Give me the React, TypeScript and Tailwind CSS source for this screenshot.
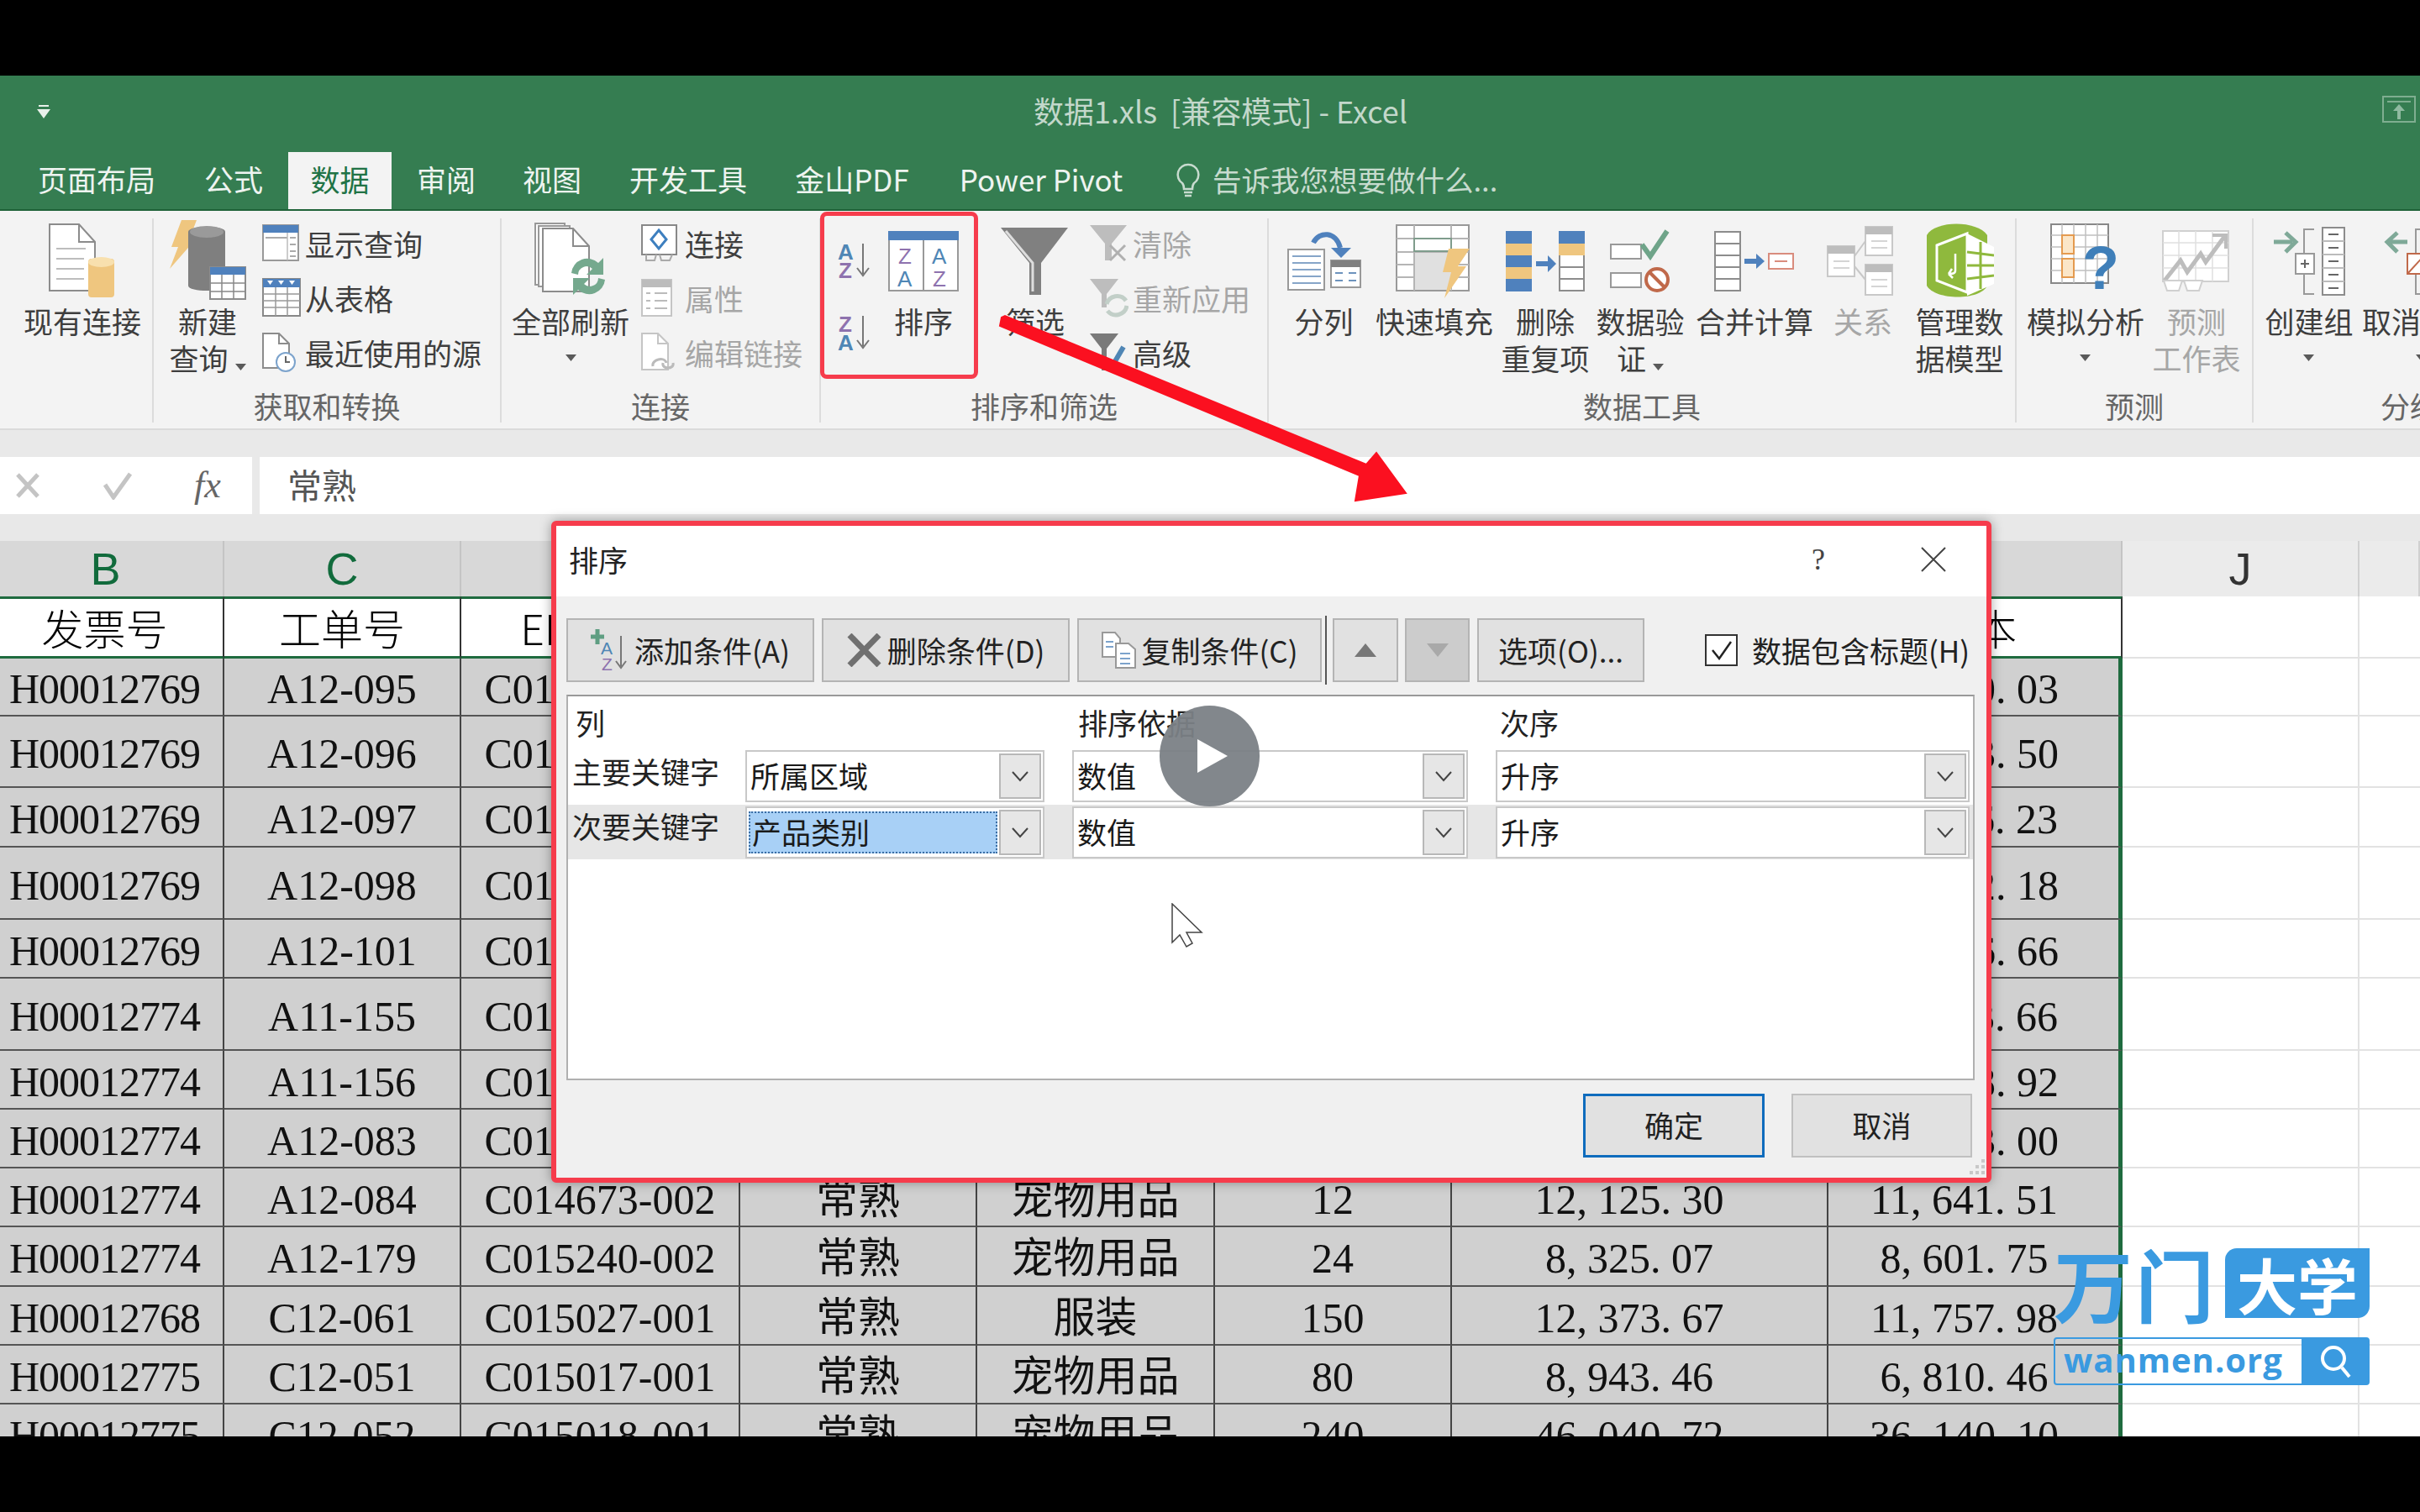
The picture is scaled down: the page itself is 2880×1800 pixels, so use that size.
import React from "react";

const Caret = ({ c = "#5a5a5a" }: { c?: string }) => (
  <svg width="13" height="8" viewBox="0 0 13 8" className="inline-block"><path d="M0 0H13L6.5 8Z" fill={c} /></svg>
);

const G = "#8c8c8c";
const BL = "#4f81bd";
const OR = "#efc67f";
const PU = "#8e72ae";

const AzText = ({ x, y, s, c }: { x: number; y: number; s: string; c: string }) => (
  <text x={x} y={y} fontFamily="Liberation Sans" fontSize="26" fontWeight="700" fill={c}>{s}</text>
);

const IExisting = () => (
  <svg width="80" height="90" viewBox="0 0 80 90">
    <path d="M1 1H36L55 22V80H1Z" fill="#fff" stroke={G} strokeWidth="2" />
    <path d="M36 1V22H55" fill="none" stroke={G} strokeWidth="2" />
    <path d="M9 30H44M9 42H42M9 54H42M9 66H42" stroke="#bdbdbd" strokeWidth="2" />
    <rect x="47" y="42" width="31" height="46" rx="4" fill={OR} />
    <ellipse cx="62.5" cy="46" rx="15.5" ry="6" fill="#f8e0ae" />
  </svg>
);
const INewQuery = () => (
  <svg width="94" height="98" viewBox="0 0 94 98">
    <path d="M16 0H34L24 26H30L2 58L12 32H4Z" fill={OR} />
    <path d="M24 14C24 6 68 6 68 14V78C68 86 24 86 24 78Z" fill="#7f7f7f" />
    <ellipse cx="46" cy="14" rx="20" ry="7" fill="#9a9a9a" />
    <rect x="50" y="56" width="42" height="38" fill="#fff" stroke={G} strokeWidth="2" />
    <rect x="50" y="56" width="42" height="9" fill={BL} />
    <path d="M50 75H92M50 85H92M64 65V94M78 65V94" stroke="#888" strokeWidth="1.5" />
  </svg>
);
const IShowQuery = () => (
  <svg width="44" height="46" viewBox="0 0 44 46">
    <rect x="1" y="1" width="42" height="42" fill="#fff" stroke="#999" strokeWidth="2" />
    <rect x="1" y="1" width="42" height="9" fill={BL} />
    <path d="M4 16H30M33 16H40M33 24H40M33 32H40M33 38H40" stroke="#aaa" strokeWidth="2" />
    <path d="M30 10V43" stroke="#bbb" strokeWidth="1.5" />
  </svg>
);
const IFromTable = () => (
  <svg width="46" height="48" viewBox="0 0 46 48">
    <rect x="1" y="1" width="44" height="44" fill="#fff" stroke="#888" strokeWidth="2" />
    <rect x="1" y="1" width="44" height="10" fill={BL} />
    <path d="M6 3H13L9.5 8ZM19 3H26L22.500 8ZM32 3H39L35.500 8Z" fill="#fff" />
    <path d="M1 19H45M1 27H45M1 35H45M16 11V45M30 11V45" stroke="#999" strokeWidth="1.5" />
  </svg>
);
const IRecent = () => (
  <svg width="40" height="48" viewBox="0 0 40 48">
    <path d="M1 1H20L32 13V42H1Z" fill="#fff" stroke={G} strokeWidth="2" />
    <path d="M20 1V13H32" fill="none" stroke={G} strokeWidth="2" />
    <circle cx="28" cy="35" r="11" fill="#fff" stroke="#7ca3cc" strokeWidth="2" />
    <path d="M28 28V35H33" fill="none" stroke="#666" strokeWidth="2" />
  </svg>
);
const IRefreshAll = () => (
  <svg width="86" height="92" viewBox="0 0 86 92">
    <path d="M1 1H36V74H1Z" fill="#fff" stroke="#999" strokeWidth="2" />
    <path d="M5 4H42V76H5Z" fill="#fff" stroke="#999" strokeWidth="2" />
    <path d="M10 7H46L65 28V82H10Z" fill="#fff" stroke={G} strokeWidth="2" />
    <path d="M46 7V28H65" fill="none" stroke={G} strokeWidth="2" />
    <path d="M44 60A19 19 0 0 1 76 48L82 42V62H62L69 55A10 10 0 0 0 52 62Z" fill="#75a98e" />
    <path d="M84 68A19 19 0 0 1 52 80L46 86V66H66L59 73A10 10 0 0 0 76 66Z" fill="#75a98e" />
  </svg>
);
const IConn = () => (
  <svg width="44" height="46" viewBox="0 0 44 46">
    <rect x="1" y="1" width="41" height="35" fill="#fff" stroke="#888" strokeWidth="2" />
    <path d="M21 7L30 18L21 29L12 18Z" fill="none" stroke="#3d7fbf" strokeWidth="3" />
    <path d="M6 36V43H16L18 36M22 36L24 43H34L37 36" fill="none" stroke="#aaa" strokeWidth="2" />
  </svg>
);
const IProps = () => (
  <svg width="38" height="46" viewBox="0 0 38 46">
    <rect x="1" y="1" width="35" height="43" fill="#fff" stroke="#c5c5c5" strokeWidth="2" />
    <rect x="1" y="1" width="35" height="9" fill="#bcbcbc" />
    <path d="M6 17H11M16 17H31M6 26H11M16 26H31M6 35H11M16 35H31" stroke="#bbb" strokeWidth="2" />
  </svg>
);
const IEditLink = () => (
  <svg width="42" height="48" viewBox="0 0 42 48">
    <path d="M1 1H20L32 13V44H1Z" fill="#fff" stroke="#c5c5c5" strokeWidth="2" />
    <path d="M20 1V13H32" fill="none" stroke="#c5c5c5" strokeWidth="2" />
    <path d="M14 40C12 32 28 28 30 36M26 36C24 44 40 44 38 36" fill="none" stroke="#bbb" strokeWidth="3" />
  </svg>
);
const ISortAZ = () => (
  <svg width="40" height="46" viewBox="0 0 40 46">
    <AzText x={0} y={21} s="A" c="#4f86b5" />
    <AzText x={1} y={43} s="Z" c={PU} />
    <path d="M30 2V38M23 31L30 40L37 31" fill="none" stroke="#777" strokeWidth="2" />
  </svg>
);
const ISortZA = () => (
  <svg width="40" height="46" viewBox="0 0 40 46">
    <AzText x={1} y={21} s="Z" c={PU} />
    <AzText x={0} y={43} s="A" c="#4f86b5" />
    <path d="M30 2V38M23 31L30 40L37 31" fill="none" stroke="#777" strokeWidth="2" />
  </svg>
);
const ISort = () => (
  <svg width="84" height="72" viewBox="0 0 84 72">
    <rect x="1" y="1" width="82" height="70" fill="#fff" stroke="#999" strokeWidth="2" />
    <rect x="0" y="0" width="84" height="11" fill={BL} />
    <path d="M42 11V71" stroke="#999" strokeWidth="2" />
    <text x="12" y="39" fontFamily="Liberation Sans" fontSize="26" fill={PU}>Z</text>
    <text x="11" y="66" fontFamily="Liberation Sans" fontSize="26" fill="#4f86b5">A</text>
    <text x="52" y="39" fontFamily="Liberation Sans" fontSize="26" fill="#4f86b5">A</text>
    <text x="53" y="66" fontFamily="Liberation Sans" fontSize="26" fill={PU}>Z</text>
  </svg>
);
const IFilter = () => (
  <svg width="82" height="80" viewBox="0 0 82 80">
    <path d="M0 0H80L48 42V80H34V42Z" fill="#808080" />
    <path d="M6 4L38 42V76" fill="none" stroke="#ddd" strokeWidth="3" />
  </svg>
);
const IFClear = () => (
  <svg width="46" height="44" viewBox="0 0 46 44">
    <path d="M0 0H44L26 22V42H18V22Z" fill="#bdbdbd" />
    <path d="M24 24L42 42M42 24L24 42" stroke="#b0b0b0" strokeWidth="3" />
  </svg>
);
const IFReapply = () => (
  <svg width="46" height="46" viewBox="0 0 46 46">
    <path d="M0 0H34L20 18V34H14V18Z" fill="#bdbdbd" />
    <path d="M20 30A13 13 0 0 1 43 26M44 32A13 13 0 0 1 21 38" fill="none" stroke="#c2cfc8" strokeWidth="5" />
  </svg>
);
const IFAdv = () => (
  <svg width="46" height="46" viewBox="0 0 46 46">
    <path d="M0 0H34L20 18V44H14V18Z" fill="#7a7a7a" />
    <path d="M26 40L40 16" stroke="#4f86b5" strokeWidth="6" />
  </svg>
);
const ISplit = () => (
  <svg width="88" height="76" viewBox="0 0 88 76">
    <rect x="1" y="24" width="43" height="48" fill="#fff" stroke="#999" strokeWidth="2" />
    <path d="M6 32H40M6 40H40M6 48H40M6 56H40M6 64H40" stroke="#86a5c8" strokeWidth="2" />
    <rect x="52" y="37" width="35" height="32" fill="#fff" stroke="#999" strokeWidth="2" />
    <rect x="52" y="37" width="35" height="8" fill="#808080" />
    <path d="M57 52H66M73 52H82M57 61H66M73 61H82" stroke="#6d93bd" strokeWidth="2" />
    <path d="M31 16C38 2 58 2 63 22" fill="none" stroke={BL} strokeWidth="6" />
    <path d="M52 22H76L64 34Z" fill={BL} />
  </svg>
);
const IFlash = () => (
  <svg width="92" height="88" viewBox="0 0 92 88">
    <rect x="1" y="1" width="86" height="78" fill="#fff" stroke="#999" strokeWidth="2" />
    <path d="M1 17H87M1 33H87M1 48H87M1 63H87M22 1V79M66 1V79" stroke="#b5b5b5" strokeWidth="2" />
    <rect x="22" y="17" width="44" height="15" fill="#fff" stroke="#7f9c8c" strokeWidth="2" />
    <rect x="23" y="34" width="43" height="44" fill="#e0e0e0" />
    <path d="M63 29H88L74 50H84L58 88L66 57H56Z" fill={OR} />
  </svg>
);
const IDup = () => (
  <svg width="94" height="72" viewBox="0 0 94 72">
    <rect x="0" y="0" width="31" height="72" fill={BL} />
    <rect x="0" y="15" width="31" height="14" fill={OR} />
    <rect x="0" y="43" width="31" height="14" fill={OR} />
    <path d="M36 39H54" stroke={BL} strokeWidth="6" />
    <path d="M50 29L60 39L50 49Z" fill={BL} />
    <rect x="64" y="1" width="29" height="70" fill="#fff" stroke={G} strokeWidth="2" />
    <rect x="63" y="0" width="31" height="15" fill={BL} />
    <rect x="63" y="15" width="31" height="14" fill={OR} />
    <path d="M64 43H93M64 57H93" stroke={G} strokeWidth="2" />
  </svg>
);
const IValidate = () => (
  <svg width="72" height="76" viewBox="0 0 72 76">
    <rect x="1" y="18" width="36" height="17" fill="#fff" stroke="#999" strokeWidth="2" />
    <rect x="1" y="52" width="36" height="17" fill="#fff" stroke="#999" strokeWidth="2" />
    <path d="M38 18L48 32L68 2" fill="none" stroke="#6fa489" strokeWidth="6" />
    <circle cx="56" cy="60" r="13" fill="#fff" stroke="#c0694a" strokeWidth="4" />
    <path d="M47 51L65 69" stroke="#c0694a" strokeWidth="4" />
  </svg>
);
const IConsolidate = () => (
  <svg width="96" height="72" viewBox="0 0 96 72">
    <rect x="1" y="1" width="30" height="70" fill="#fff" stroke={G} strokeWidth="2" />
    <path d="M1 15H31M1 29H31M1 43H31M1 57H31" stroke={G} strokeWidth="2" />
    <path d="M36 36H54" stroke={BL} strokeWidth="6" />
    <path d="M50 27L60 36L50 45Z" fill={BL} />
    <rect x="65" y="27" width="29" height="18" fill="#fff" stroke="#d98c7d" strokeWidth="2" />
    <path d="M72 36H87" stroke="#d98c7d" strokeWidth="2" />
  </svg>
);
const IRelate = () => (
  <svg width="86" height="84" viewBox="0 0 86 84">
    <rect x="46" y="1" width="32" height="34" fill="#fff" stroke="#c8c8c8" strokeWidth="2" />
    <rect x="46" y="1" width="32" height="9" fill="#bdbdbd" />
    <rect x="1" y="24" width="32" height="36" fill="#fff" stroke="#c8c8c8" strokeWidth="2" />
    <rect x="1" y="24" width="32" height="9" fill="#bdbdbd" />
    <rect x="46" y="46" width="32" height="36" fill="#fff" stroke="#c8c8c8" strokeWidth="2" />
    <rect x="46" y="46" width="32" height="9" fill="#bdbdbd" />
    <path d="M33 36L46 18M33 48L46 64" stroke="#c8c8c8" strokeWidth="2" />
    <path d="M53 18H72M53 26H72M53 64H72M53 72H72M8 42H27M8 50H27" stroke="#d5d5d5" strokeWidth="2" />
  </svg>
);
const IModel = () => (
  <svg width="82" height="90" viewBox="0 0 82 90">
    <path d="M2 14C12 -4 62 -4 74 14V74C66 92 12 92 2 74Z" fill="#8fb93d" />
    <path d="M14 26L50 12V82L14 68Z" fill="none" stroke="#fff" strokeWidth="3" />
    <path d="M50 12L82 28V72L50 86Z" fill="#fff" />
    <path d="M50 34L82 38M50 50L82 50M50 66L82 62M66 22V78" stroke="#8fb93d" strokeWidth="3" />
    <path d="M36 36V56C36 60 32 60 28 60M28 60L32 54M28 60L33 65" fill="none" stroke="#fff" strokeWidth="2.500" />
  </svg>
);
const IWhatIf = () => (
  <svg width="84" height="90" viewBox="0 0 84 90">
    <rect x="1" y="1" width="68" height="70" fill="#fff" stroke="#888" strokeWidth="2" />
    <path d="M1 14H69M1 28H69M1 42H69M1 56H69M14 1V71M28 1V71M42 1V71M56 1V71" stroke="#c0c0c0" strokeWidth="1.500" />
    <rect x="14" y="14" width="14" height="22" fill="#fbe6c8" stroke="#e49a4f" strokeWidth="2" />
    <rect x="14" y="42" width="14" height="22" fill="#fbe6c8" stroke="#e49a4f" strokeWidth="2" />
    <text x="38" y="78" fontFamily="Liberation Sans" fontSize="72" fontWeight="700" fill="#3f7fb9">?</text>
  </svg>
);
const IForecast = () => (
  <svg width="82" height="74" viewBox="0 0 82 74">
    <rect x="1" y="1" width="78" height="60" fill="#fff" stroke="#d0d0d0" strokeWidth="2" />
    <path d="M1 15H79M1 30H79M1 45H79M20 1V61M40 1V61M60 1V61" stroke="#e0e0e0" strokeWidth="1.500" />
    <path d="M3 60L22 36L30 50L46 28L52 38L74 8" fill="none" stroke="#bdbdbd" strokeWidth="5" />
    <path d="M60 6H76V22" fill="none" stroke="#bdbdbd" strokeWidth="4" />
    <path d="M2 60H24L20 72H6ZM26 60H48L44 72H30Z" fill="#fff" stroke="#d0d0d0" strokeWidth="2" />
  </svg>
);
const IGroup = () => (
  <svg width="88" height="82" viewBox="0 0 88 82">
    <path d="M2 18H24M16 7L28 18L16 30" fill="none" stroke="#7fa998" strokeWidth="5" />
    <path d="M50 3H38V80H50" fill="none" stroke="#999" strokeWidth="2" />
    <rect x="28" y="32" width="22" height="24" fill="#fff" stroke="#999" strokeWidth="2" />
    <path d="M34 44H44M39 39V49" stroke="#666" strokeWidth="2" />
    <rect x="60" y="1" width="26" height="80" fill="#fff" stroke={G} strokeWidth="2" />
    <path d="M60 17H86M60 33H86M60 49H86M60 65H86" stroke="#bbb" strokeWidth="2" />
    <path d="M67 9H79M67 25H79M67 41H79M67 57H79M67 73H79" stroke="#666" strokeWidth="2" />
  </svg>
);
const IUngroup = () => (
  <svg width="88" height="82" viewBox="0 0 88 82">
    <path d="M28 18H6M16 7L4 18L16 30" fill="none" stroke="#7fa998" strokeWidth="5" />
    <path d="M50 3H38V80H50" fill="none" stroke="#999" strokeWidth="2" />
    <rect x="28" y="32" width="22" height="24" fill="#fff" stroke="#c0694a" strokeWidth="2" />
    <path d="M28 56L50 32" stroke="#c0694a" strokeWidth="2" />
  </svg>
);

const Big = ({ cls, icon, lines, caret, dim }: { cls: string; icon: React.ReactNode; lines: string[]; caret?: "inline" | "below"; dim?: boolean }) => (
  <div className={"flex flex-col items-center shrink-0 " + cls}>
    <div className="h-[98px] flex items-center justify-center">{icon}</div>
    <div className={"text-[35px] leading-[44px] whitespace-nowrap text-center " + (dim ? "text-[#a6a6a6]" : "text-[#3e3e3e]")}>
      {lines.map((l, i) => (
        <div key={i}>
          {l}
          {caret === "inline" && i === lines.length - 1 ? <span className="ml-[8px] align-middle"><Caret /></span> : null}
        </div>
      ))}
      {caret === "below" ? <div className="h-[44px] flex items-center justify-center"><Caret /></div> : null}
    </div>
  </div>
);

const Small = ({ icon, label, dim, w }: { icon: React.ReactNode; label: string; dim?: boolean; w?: string }) => (
  <div className="flex items-center h-[65px]">
    <div className={"shrink-0 flex items-center " + (w ?? "w-[51px]")}>{icon}</div>
    <span className={"text-[35px] leading-[44px] whitespace-nowrap " + (dim ? "text-[#a6a6a6]" : "text-[#3e3e3e]")}>{label}</span>
  </div>
);

const Group = ({ cls, label, children }: { cls: string; label: string; children: React.ReactNode }) => (
  <div className={"shrink-0 flex flex-col h-[243px] border-r-[2px] border-r-[#dcdcdc] " + cls}>
    <div className="h-[204px] pt-[2px] flex items-start">{children}</div>
    <div className="h-[39px] flex items-center justify-center text-[35px] text-[#666666] whitespace-nowrap">{label}</div>
  </div>
);

const tabs: [string, string][] = [
  ["页面布局", "w-[196px]"],
  ["公式", "w-[130px]"],
  ["数据", "w-[123px]"],
  ["审阅", "w-[130px]"],
  ["视图", "w-[122px]"],
  ["开发工具", "w-[202px]"],
  ["金山PDF", "w-[188px]"],
  ["Power Pivot", "w-[262px]"],
];

const Ribbon = () => (
  <div className="h-[261px] bg-[#f3f3f3] flex pt-[9px] border-b-[2px] border-b-[#dadada] overflow-hidden">
    <Group cls="w-[183px]" label="">
      <Big cls="w-[140px] ml-[28px]" icon={<IExisting />} lines={["现有连接"]} />
    </Group>
    <Group cls="w-[414px]" label="获取和转换">
      <Big cls="w-[120px] ml-[4px]" icon={<INewQuery />} lines={["新建", "查询"]} caret="inline" />
      <div className="ml-[5px] -mt-[5px]">
        <Small icon={<IShowQuery />} label="显示查询" />
        <Small icon={<IFromTable />} label="从表格" />
        <Small icon={<IRecent />} label="最近使用的源" />
      </div>
    </Group>
    <Group cls="w-[380px]" label="连接">
      <Big cls="w-[140px] ml-[12px]" icon={<IRefreshAll />} lines={["全部刷新"]} caret="below" />
      <div className="ml-[14px] -mt-[5px]">
        <Small w="w-[52px]" icon={<IConn />} label="连接" />
        <Small w="w-[52px]" icon={<IProps />} label="属性" dim />
        <Small w="w-[52px]" icon={<IEditLink />} label="编辑链接" dim />
      </div>
    </Group>
    <Group cls="w-[533px]" label="排序和筛选">
      <div className="w-[59px] ml-[20px] mr-[-7px] flex flex-col gap-[40px] pt-[26px] shrink-0">
        <ISortAZ />
        <ISortZA />
      </div>
      <Big cls="w-[100px]" icon={<ISort />} lines={["排序"]} />
      <Big cls="w-[110px] ml-[28px]" icon={<IFilter />} lines={["筛选"]} />
      <div className="ml-[10px] -mt-[5px]">
        <Small icon={<IFClear />} label="清除" dim />
        <Small icon={<IFReapply />} label="重新应用" dim />
        <Small icon={<IFAdv />} label="高级" />
      </div>
    </Group>
    <Group cls="w-[890px]" label="数据工具">
      <Big cls="w-[131px]" icon={<ISplit />} lines={["分列"]} />
      <Big cls="w-[132px]" icon={<IFlash />} lines={["快速填充"]} />
      <Big cls="w-[132px]" icon={<IDup />} lines={["删除", "重复项"]} />
      <Big cls="w-[94px]" icon={<IValidate />} lines={["数据验", "证"]} caret="inline" />
      <Big cls="w-[178px]" icon={<IConsolidate />} lines={["合并计算"]} />
      <Big cls="w-[80px]" icon={<IRelate />} lines={["关系"]} dim />
      <Big cls="w-[150px]" icon={<IModel />} lines={["管理数", "据模型"]} />
    </Group>
    <Group cls="w-[282px]" label="预测">
      <Big cls="w-[164px]" icon={<IWhatIf />} lines={["模拟分析"]} caret="below" />
      <Big cls="w-[100px]" icon={<IForecast />} lines={["预测", "工作表"]} dim />
    </Group>
    <Group cls="w-[444px] border-r-0" label="分级显示">
      <Big cls="w-[132px]" icon={<IGroup />} lines={["创建组"]} caret="below" />
      <Big cls="w-[134px]" icon={<IUngroup />} lines={["取消组合"]} caret="below" />
    </Group>
  </div>
);

const COLS = "grid grid-cols-[267px_282px_332px_282px_283px_282px_448px_350px_282px_1fr]";

const letters = ["B", "C", "D", "E", "F", "G", "H", "I", "J", ""];
const heads = ["发票号", "工单号", "ERP单号", "所属区域", "产品类别", "数量", "金额", "成本", "", ""];

const rows: { h: number; c: string[] }[] = [
  { h: 69, c: ["H00012769", "A12-095", "C014650-001", "", "", "", "", "10, 830. 03"] },
  { h: 85, c: ["H00012769", "A12-096", "C014651-001", "", "", "", "", "18, 653. 50"] },
  { h: 71, c: ["H00012769", "A12-097", "C014652-001", "", "", "", "", "11, 216. 23"] },
  { h: 86, c: ["H00012769", "A12-098", "C014653-001", "", "", "", "", "17, 402. 18"] },
  { h: 70, c: ["H00012769", "A12-101", "C014654-001", "", "", "", "", "19, 326. 66"] },
  { h: 86, c: ["H00012774", "A11-155", "C014670-001", "", "", "", "", "10, 113. 66"] },
  { h: 70, c: ["H00012774", "A11-156", "C014671-001", "", "", "", "", "18, 058. 92"] },
  { h: 70, c: ["H00012774", "A12-083", "C014672-001", "", "", "", "", "12, 003. 00"] },
  { h: 70, c: ["H00012774", "A12-084", "C014673-002", "常熟", "宠物用品", "12", "12, 125. 30", "11, 641. 51"] },
  { h: 71, c: ["H00012774", "A12-179", "C015240-002", "常熟", "宠物用品", "24", "8, 325. 07", "8, 601. 75"] },
  { h: 70, c: ["H00012768", "C12-061", "C015027-001", "常熟", "服装", "150", "12, 373. 67", "11, 757. 98"] },
  { h: 70, c: ["H00012775", "C12-051", "C015017-001", "常熟", "宠物用品", "80", "8, 943. 46", "6, 810. 46"] },
  { h: 70, c: ["H00012775", "C12-052", "C015018-001", "常熟", "宠物用品", "240", "46, 040. 72", "36, 140. 10"] },
];

const padFor = (i: number) => (i === 0 ? "pr-[16px] tracking-[-1px]" : i === 6 ? "pr-[24px]" : i === 7 ? "pr-[22px]" : "");

const Sheet = () => (
  <div className="flex-1 bg-white overflow-hidden">
    <div className="h-[32px] bg-[#e8e8e8]" />
    <div className={COLS + " h-[66px]"}>
      {letters.map((l, i) => (
        <div key={i} className={"flex items-center justify-center border-r-[2px] text-[54px] leading-[60px] font-['Liberation_Sans',sans-serif] " + (i < 8 ? "bg-[#d8d8d8] border-r-[#c4c4c4] text-[#116b3c]" : "bg-[#ebebeb] border-r-[#d0d0d0] text-[#333333]") + (i === 0 ? " pr-[14px]" : "")}>
          {l}
        </div>
      ))}
    </div>
    <div className={COLS + " h-[74px]"}>
      {heads.map((l, i) =>
        i < 8 ? (
          <div key={i} className={"flex items-center justify-center bg-white border-y-[3px] border-y-[#1f6b3f] border-r-[2px] border-r-[#333333] pb-[2px] text-[50px] leading-[60px] font-light text-black whitespace-nowrap " + (i === 0 ? "pr-[16px]" : "")}>
            {l}
          </div>
        ) : (
          <div key={i} className={"bg-white border-b-[2px] border-b-[#e2e2e2] " + (i === 8 ? "border-r-[2px] border-r-[#e2e2e2]" : "")} />
        )
      )}
    </div>
    {rows.map((r, ri) => (
      <div key={ri} className={COLS} style={{ height: r.h }}>
        {r.c.map((t, i) => (
          <div key={i} className={"flex items-center justify-center min-h-0 pt-[5px] bg-[#d0d0d0] border-b-[2px] border-b-[#555555] whitespace-nowrap text-[50px] leading-[50px] text-[#111111] font-['Liberation_Serif','Noto_Sans_CJK_SC',serif] " + padFor(i) + (i === 7 ? " border-r-[5px] border-r-[#1f6b3f]" : " border-r-[2px] border-r-[#444444]")}>
            {t}
          </div>
        ))}
        <div className="bg-white border-b-[2px] border-b-[#e2e2e2] border-r-[2px] border-r-[#e2e2e2]" />
        <div className="bg-white border-b-[2px] border-b-[#e2e2e2]" />
      </div>
    ))}
  </div>
);

const Chevron = () => (
  <svg width="22" height="14" viewBox="0 0 22 14"><path d="M2 2L11 12L20 2" fill="none" stroke="#444" strokeWidth="2" /></svg>
);

const Select = ({ cls, text, hl }: { cls: string; text: string; hl?: boolean }) => (
  <div className={"shrink-0 flex items-stretch bg-white border-[2px] border-[#c8c8c8] p-[2px] h-[62px] " + cls}>
    <div className="flex-1 flex items-center pr-[2px]">
      <span className={"flex-1 h-[50px] flex items-center pl-[2px] pb-[2px] text-[35px] text-[#1a1a1a] " + (hl ? "bg-[#a8d0f6] border-[2px] border-dotted border-[#3a6ea5]" : "")}>{text}</span>
    </div>
    <div className="w-[50px] bg-[#e6e6e6] border-[2px] border-[#b8b8b8] flex items-center justify-center"><Chevron /></div>
  </div>
);

const ToolBtn = ({ cls, children, bg }: { cls: string; children: React.ReactNode; bg?: string }) => (
  <div className={"shrink-0 h-[76px] flex items-center justify-center gap-[6px] border-[2px] border-[#b4b4b4] text-[35px] text-[#222222] whitespace-nowrap " + (bg ?? "bg-[#e1e1e1]") + " " + cls}>
    {children}
  </div>
);

const Dialog = () => (
  <div className="absolute left-[656px] top-[620px] w-[1714px] h-[788px] border-[6px] border-[#f63c4c] rounded-[6px] bg-[#f0f0f0] flex flex-col shadow-[0_0_14px_rgba(0,0,0,0.35)]">
    <div className="h-[84px] bg-white flex items-center pl-[15px] pb-[4px] text-[35px] text-[#222222]">
      <span className="flex-1">排序</span>
      <span className="w-[130px] text-[36px] text-[#444444] font-['Liberation_Serif',serif]">?</span>
      <svg width="30" height="30" viewBox="0 0 30 30" className="mr-[48px]"><path d="M1 1L29 29M29 1L1 29" stroke="#444" strokeWidth="2" /></svg>
    </div>
    <div className="flex-1 pl-[12px] pr-[14px] pt-[26px] flex flex-col">
      <div className="flex items-center h-[76px]">
        <ToolBtn cls="w-[295px]">
          <svg width="46" height="50" viewBox="0 0 46 50">
            <path d="M8 0V18M0 9H16" stroke="#5f9e82" strokeWidth="5" />
            <text x="12" y="30" fontFamily="Liberation Sans" fontSize="21" fill="#4f86b5">A</text>
            <text x="13" y="49" fontFamily="Liberation Sans" fontSize="21" fill={PU}>Z</text>
            <path d="M36 8V44M30 38L36 46L42 38" fill="none" stroke="#777" strokeWidth="2" />
          </svg>
          添加条件(A)
        </ToolBtn>
        <ToolBtn cls="w-[295px] ml-[9px]">
          <svg width="42" height="40" viewBox="0 0 42 40"><path d="M3 2L38 38M38 2L3 38" stroke="#707070" strokeWidth="7" /></svg>
          删除条件(D)
        </ToolBtn>
        <ToolBtn cls="w-[291px] ml-[9px]">
          <svg width="42" height="44" viewBox="0 0 42 44">
            <path d="M1 1H16L22 8V30H1Z" fill="#fff" stroke="#999" strokeWidth="2" />
            <path d="M17 14H32L40 21V43H17Z" fill="#fff" stroke="#999" strokeWidth="2" />
            <path d="M5 12H14M5 18H14M22 26H34M22 32H34M22 38H34" stroke="#7ca3cc" strokeWidth="2" />
          </svg>
          复制条件(C)
        </ToolBtn>
        <div className="w-[2px] h-[82px] -my-[3px] bg-[#555555] ml-[4px] shrink-0" />
        <ToolBtn cls="w-[78px] ml-[7px]">
          <svg width="26" height="16" viewBox="0 0 26 16"><path d="M13 0L26 16H0Z" fill="#777" /></svg>
        </ToolBtn>
        <ToolBtn cls="w-[77px] ml-[8px]" bg="bg-[#cccccc]">
          <svg width="26" height="16" viewBox="0 0 26 16"><path d="M0 0H26L13 16Z" fill="#a9a9a9" /></svg>
        </ToolBtn>
        <ToolBtn cls="w-[199px] ml-[9px]">选项(O)...</ToolBtn>
        <div className="ml-[72px] w-[39px] h-[38px] bg-white border-[2px] border-[#333333] flex items-center justify-center shrink-0">
          <svg width="26" height="24" viewBox="0 0 26 24"><path d="M2 12L10 22L24 2" fill="none" stroke="#222" strokeWidth="2.500" /></svg>
        </div>
        <span className="ml-[17px] text-[35px] text-[#222222] whitespace-nowrap">数据包含标题(H)</span>
      </div>
      <div className="mt-[15px] h-[459px] w-[1676px] bg-white border-[2px] border-[#b0b0b0] border-t-[#999999] text-[35px] text-[#222222]">
        <div className="h-[64px] flex items-center pb-[2px]">
          <span className="w-[607px] pl-[9px]">列</span>
          <span className="w-[502px]">排序依据</span>
          <span>次序</span>
        </div>
        <div className="h-[65px] flex">
          <span className="w-[211px] pl-[5px] shrink-0 leading-[50px]">主要关键字</span>
          <Select cls="w-[356px]" text="所属区域" />
          <Select cls="w-[471px] ml-[33px]" text="数值" />
          <Select cls="w-[564px] ml-[33px]" text="升序" />
        </div>
        <div className="h-[65px] flex bg-[#e6e6e6] pt-[2px]">
          <span className="w-[211px] pl-[5px] shrink-0 leading-[46px]">次要关键字</span>
          <Select cls="w-[356px]" text="产品类别" hl />
          <Select cls="w-[471px] ml-[33px]" text="数值" />
          <Select cls="w-[564px] ml-[33px]" text="升序" />
        </div>
      </div>
      <div className="mt-[16px] flex justify-end gap-[32px] pr-[3px]">
        <div className="w-[216px] h-[76px] bg-[#e1e1e1] border-[3px] border-[#0f6cbd] flex items-center justify-center pb-[2px] text-[35px] text-[#222222]">确定</div>
        <div className="w-[215px] h-[76px] bg-[#e1e1e1] border-[2px] border-[#c0c0c0] flex items-center justify-center pb-[2px] text-[35px] text-[#222222]">取消</div>
      </div>
    </div>
    <svg width="24" height="24" viewBox="0 0 24 24" className="absolute right-0 bottom-0">
      <path d="M18 2h4v4h-4zM18 9h4v4h-4zM11 9h4v4h-4zM18 16h4v4h-4zM11 16h4v4h-4zM4 16h4v4H4z" fill="#c8c8c8" />
    </svg>
  </div>
);

export default function App() {
  return (
    <div className="relative w-[2880px] h-[1800px] bg-black overflow-hidden flex flex-col font-['Noto_Sans_CJK_SC','Liberation_Sans',sans-serif]">
      <div className="h-[90px] shrink-0" />
      <div className="h-[161px] shrink-0 bg-[#357d51] border-b-[2px] border-b-[#1f6238] flex flex-col">
        <div className="h-[91px] flex items-center relative">
          <svg width="18" height="18" viewBox="0 0 18 18" className="ml-[43px] -mt-[5px]"><path d="M3 1H15V3H3ZM1 6H17L9 17Z" fill="#e8f0ea" /></svg>
          <div className="absolute left-[1230px] top-[17px] text-[36px] leading-[48px] text-[#c3d8cb] whitespace-pre">数据1.xls  [兼容模式] - Excel</div>
          <svg width="40" height="32" viewBox="0 0 40 32" className="absolute right-[5px] top-[24px]">
            <rect x="1" y="1" width="38" height="30" fill="none" stroke="#7fae90" strokeWidth="2" />
            <path d="M6 7H34" stroke="#7fae90" strokeWidth="2" />
            <path d="M20 10L27 18H22V28H18V18H13Z" fill="#8fbaa0" />
          </svg>
        </div>
        <div className="flex-1 flex items-stretch pl-[17px]">
          {tabs.map(([t, w]) => (
            <div key={t} className={"flex items-center justify-center pb-[4px] text-[35px] whitespace-nowrap " + w + (t === "数据" ? " bg-[#f3f3f3] text-[#217346]" : " text-[#eef4f0]")}>
              {t}
            </div>
          ))}
          <svg width="30" height="42" viewBox="0 0 30 42" className="ml-[29px] self-center">
            <path d="M15 2A12 12 0 0 0 8 24C10 26 10 28 10 31H20C20 28 20 26 22 24A12 12 0 0 0 15 2Z" fill="none" stroke="#c7dbce" strokeWidth="2.500" />
            <path d="M10 35H20M11 39H19" stroke="#c7dbce" strokeWidth="2.500" />
          </svg>
          <div className="ml-[14px] flex items-center pb-[2px] text-[34.5px] text-[#c7dbce] whitespace-nowrap">告诉我您想要做什么...</div>
        </div>
      </div>
      <Ribbon />
      <div className="h-[100px] shrink-0 bg-[#e9e9e9] pt-[32px] flex gap-[9px]">
        <div className="w-[300px] h-[68px] bg-white flex items-center">
          <svg width="30" height="32" viewBox="0 0 30 32" className="ml-[18px]"><path d="M3 3L27 29M27 3L3 29" stroke="#c4c4c4" strokeWidth="5" /></svg>
          <svg width="36" height="34" viewBox="0 0 36 34" className="ml-[74px]"><path d="M3 16L13 31L33 3" fill="none" stroke="#c4c4c4" strokeWidth="5" /></svg>
          <span className="ml-[73px] text-[44px] italic text-[#666666] font-['Liberation_Serif',serif]">fx</span>
        </div>
        <div className="flex-1 h-[68px] bg-white flex items-center pl-[33px] pb-[2px] text-[41px] text-[#555555]">常熟</div>
      </div>
      <Sheet />
      <div className="h-[90px] shrink-0 bg-black" />

      <div className="absolute left-[976px] top-[252px] w-[188px] h-[199px] border-[5px] border-[#f63c4c] rounded-[8px]" />

      <Dialog />

      <svg width="520" height="240" viewBox="0 0 520 240" className="absolute left-[1170px] top-[370px]">
        <path d="M22 8L20 18L448 196L443 226L503 217L468 169L456 183L26 6Z" fill="#fb1020" stroke="#fb1020" strokeWidth="2" />
      </svg>

      <div className="absolute left-[1380px] top-[840px] w-[119px] h-[120px] rounded-full bg-[#7b8186]/95 flex items-center justify-center">
        <svg width="36" height="40" viewBox="0 0 36 40" className="ml-[6px]"><path d="M0 0L36 20L0 40Z" fill="#fff" /></svg>
      </div>

      <svg width="38" height="54" viewBox="0 0 38 54" className="absolute left-[1394px] top-[1075px]">
        <path d="M1 1V47L10 38L18 52L25 48L18 35L36 35Z" fill="#fff" stroke="#444" strokeWidth="1.500" />
      </svg>

      <div className="absolute left-[2444px] top-[1486px] w-[376px] flex flex-col">
        <div className="h-[83px] flex items-stretch">
          <div className="w-[204px] text-[94px] leading-[83px] font-bold text-[#3a9ae0] whitespace-nowrap tracking-[3px]">万门</div>
          <div className="flex-1 bg-[#3a9ae0] rounded-tl-[14px] rounded-br-[14px] flex items-center justify-center text-[72px] leading-[83px] font-bold text-white whitespace-nowrap">大学</div>
        </div>
        <div className="mt-[23px] h-[57px] border-[2px] border-[#3a9ae0] rounded-[4px] flex items-stretch">
          <div className="flex-1 pl-[10px] pb-[3px] flex items-center text-[40px] font-bold text-[#3a9ae0] font-['Open_Sans','Liberation_Sans',sans-serif] whitespace-nowrap tracking-[1px]">wanmen.org</div>
          <div className="w-[79px] bg-[#3a9ae0] flex items-center justify-center">
            <svg width="38" height="42" viewBox="0 0 38 42"><circle cx="17" cy="17" r="13" fill="none" stroke="#fff" strokeWidth="4" /><path d="M27 28L36 39" stroke="#fff" strokeWidth="4" /></svg>
          </div>
        </div>
      </div>
    </div>
  );
}
